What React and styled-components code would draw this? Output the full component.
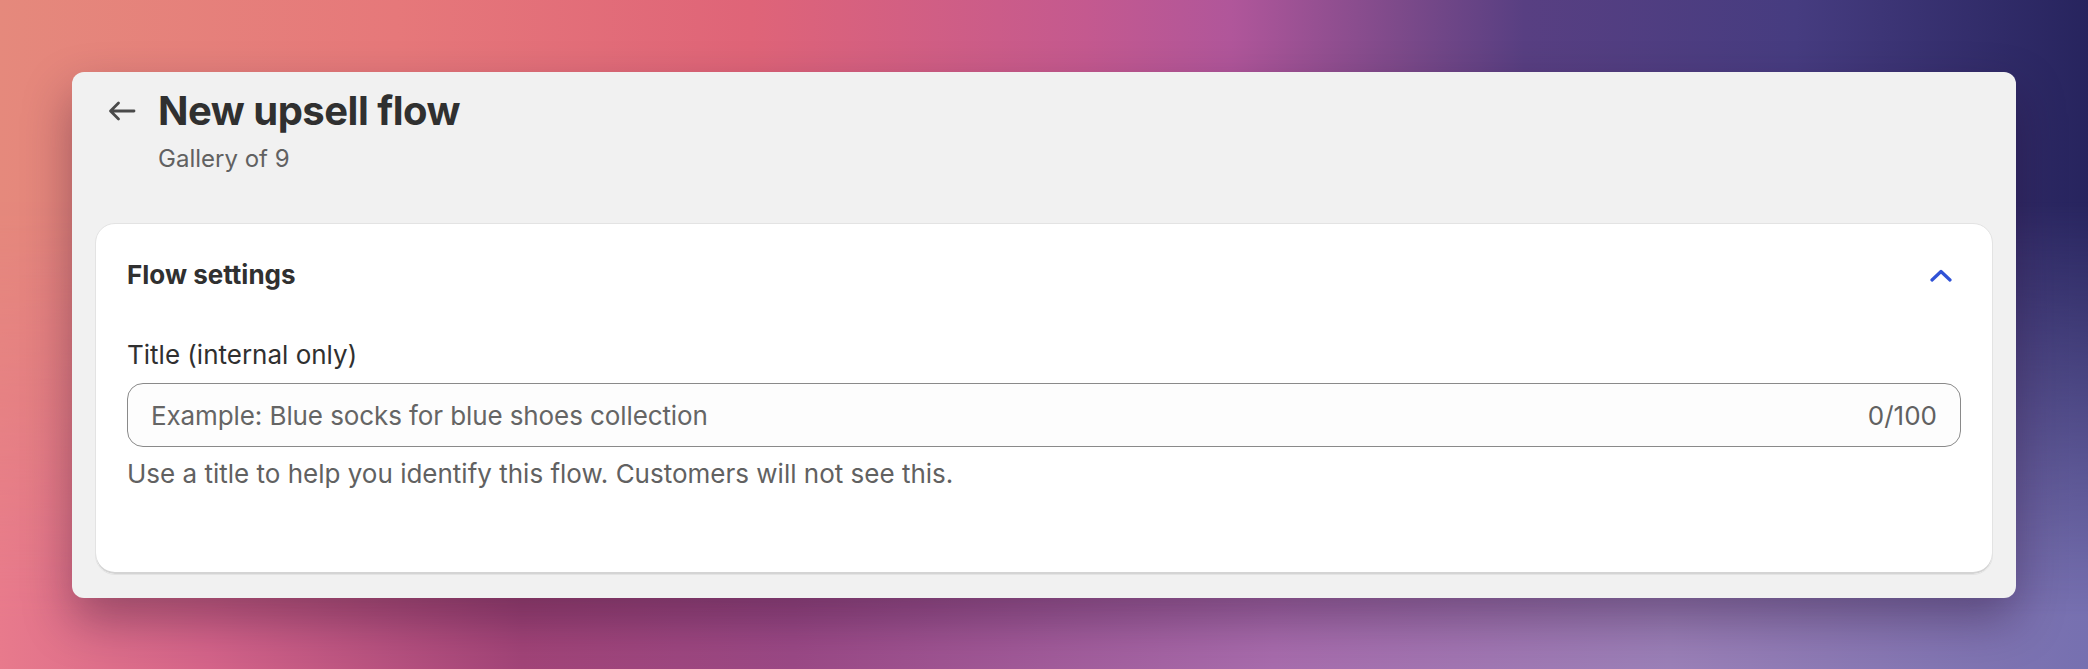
import React, { useState } from 'react';
import styled, { createGlobalStyle } from 'styled-components';

const GlobalStyle = createGlobalStyle`
  html, body {
    margin: 0;
    padding: 0;
  }
  body {
    font-family: Inter, "Noto Sans", sans-serif;
    -webkit-font-smoothing: antialiased;
  }
`;

const Stage = styled.div`
  position: relative;
  min-height: 669px;
  box-sizing: border-box;
  padding: 72px 72px 72px;
  overflow: hidden;
  background: linear-gradient(
    90deg,
    #e5897c 0%,
    #e6787a 19%,
    #df6478 36%,
    #c4598f 52%,
    #b0569a 59%,
    #7d4a8a 67%,
    #583f82 73%,
    #463c80 86%,
    #27245e 100%
  );
  &::before {
    content: '';
    position: absolute;
    inset: 0;
    background: linear-gradient(
      90deg,
      #e87a8c 0%,
      #d5648a 10%,
      #a24478 25%,
      #9b4986 38%,
      #a86cad 61%,
      #9b80b8 80%,
      #7670b0 100%
    );
    -webkit-mask-image: linear-gradient(to bottom, transparent 30%, #000 92%);
    mask-image: linear-gradient(to bottom, transparent 30%, #000 92%);
  }
`;

const Panel = styled.main`
  position: relative;
  z-index: 1;
  background: #f1f1f1;
  border-radius: 12px;
  padding: 15px 23px 23px;
  box-shadow: 0 22px 48px rgba(40, 10, 45, 0.38);
`;

const Header = styled.header`
  display: grid;
  grid-template-columns: 28px 1fr;
  column-gap: 22px;
  padding-left: 13px;
`;

const BackButton = styled.button`
  height: 48px;
  padding: 0;
  border: none;
  background: none;
  display: flex;
  align-items: center;
  color: #4a4a4a;
  cursor: pointer;
`;

const Title = styled.h1`
  margin: 0;
  font-size: 40px;
  line-height: 48px;
  font-weight: 700;
  letter-spacing: -0.5px;
  color: #303030;
`;

const Subtitle = styled.p`
  margin: 8px 0 0;
  font-size: 24px;
  line-height: 32px;
  color: #616161;
`;

const Card = styled.section`
  margin-top: 48px;
  background: #fff;
  border: 1px solid #e3e3e3;
  border-radius: 20px;
  box-shadow: inset 0 -2px 0 #d4d4d4;
  padding: 31px 31px 84px;
`;

const CardHeader = styled.div`
  display: flex;
  align-items: center;
  justify-content: space-between;
  height: 40px;
`;

const CardTitle = styled.h2`
  margin: 0;
  font-size: 26px;
  line-height: 40px;
  font-weight: 700;
  color: #303030;
`;

const ToggleButton = styled.button`
  width: 40px;
  height: 40px;
  padding: 0;
  border: none;
  background: none;
  display: flex;
  align-items: center;
  justify-content: center;
  color: #3052d6;
  cursor: pointer;
`;

const Field = styled.div`
  margin-top: 40px;
`;

const Label = styled.label`
  display: block;
  font-size: 26px;
  line-height: 40px;
  color: #303030;
`;

const InputBox = styled.div`
  margin-top: 8px;
  height: 64px;
  box-sizing: border-box;
  display: flex;
  align-items: center;
  gap: 16px;
  padding: 0 23px;
  border: 1px solid #8a8a8a;
  border-radius: 16px;
  background: #fdfdfd;
`;

const Input = styled.input`
  flex: 1;
  min-width: 0;
  padding: 0;
  border: none;
  outline: none;
  background: transparent;
  font-family: inherit;
  font-size: 26px;
  letter-spacing: -0.1px;
  color: #303030;
  &::placeholder {
    color: #656565;
  }
`;

const Counter = styled.span`
  font-size: 26px;
  color: #616161;
`;

const Help = styled.p`
  margin: 11px 0 0;
  font-size: 26px;
  line-height: 32px;
  color: #616161;
`;

const ArrowLeft = () => (
  <svg width="28" height="20" viewBox="0 0 28 20" fill="none">
    <path
      d="M26 10H3M10.5 2L2.5 10L10.5 18"
      stroke="currentColor"
      strokeWidth="2.8"
      strokeLinecap="round"
      strokeLinejoin="round"
    />
  </svg>
);

const ChevronUp = ({ open }) => (
  <svg
    width="22"
    height="13"
    viewBox="0 0 22 13"
    fill="none"
    style={{ transform: open ? 'none' : 'rotate(180deg)' }}
  >
    <path
      d="M2 11L11 2.5L20 11"
      stroke="currentColor"
      strokeWidth="3.2"
      strokeLinecap="round"
      strokeLinejoin="round"
    />
  </svg>
);

export default function App() {
  const [open, setOpen] = useState(true);
  const [title, setTitle] = useState('');

  return (
    <>
      <GlobalStyle />
      <Stage>
        <Panel>
          <Header>
            <BackButton aria-label="Back">
              <ArrowLeft />
            </BackButton>
            <div>
              <Title>New upsell flow</Title>
              <Subtitle>Gallery of 9</Subtitle>
            </div>
          </Header>

          <Card>
            <CardHeader>
              <CardTitle>Flow settings</CardTitle>
              <ToggleButton aria-label="Toggle" onClick={() => setOpen(!open)}>
                <ChevronUp open={open} />
              </ToggleButton>
            </CardHeader>
            {open && (
              <Field>
                <Label htmlFor="flow-title">Title (internal only)</Label>
                <InputBox>
                  <Input
                    id="flow-title"
                    value={title}
                    maxLength={100}
                    onChange={(e) => setTitle(e.target.value)}
                    placeholder="Example: Blue socks for blue shoes collection"
                  />
                  <Counter>{title.length}/100</Counter>
                </InputBox>
                <Help>Use a title to help you identify this flow. Customers will not see this.</Help>
              </Field>
            )}
          </Card>
        </Panel>
      </Stage>
    </>
  );
}
